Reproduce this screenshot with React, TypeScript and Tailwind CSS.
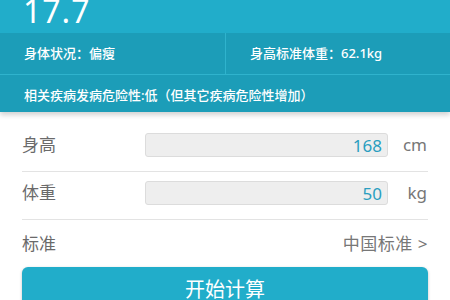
const font = { fontFamily: '"Noto Sans", "Noto Sans CJK SC", sans-serif' };

function InputRow({ label, value, unit }: { label: string; value: string; unit: string }) {
  return (
    <div className="flex items-center h-[48px] pb-[5px] border-b border-[#e3e3e3]">
      <span className="w-[123px] text-[17px] text-[#6a6a6a]">{label}</span>
      <div className="w-[243px] h-[24px] rounded-[3px] bg-[#eeeeee] border border-[#dcdcdc] flex items-center justify-end pr-[5px]">
        <span className="text-[17px] text-[#2a9ec0] leading-none">{value}</span>
      </div>
      <span className="flex-1 text-right pr-[1px] text-[17px] text-[#777]">{unit}</span>
    </div>
  );
}

export default function App() {
  return (
    <div className="w-[450px] h-[300px] overflow-hidden bg-white" style={font}>
      {/* Result card */}
      <div className="bg-[#21adca] shadow-[0_3px_5px_rgba(0,0,0,0.18)]">
        <div className="h-[33px] overflow-hidden pl-[23px]">
          <div className="text-[32px] leading-[36px] -mt-[7px] text-white tracking-[1px]">17.7</div>
        </div>
        <div className="bg-[#1c9db8] text-white text-[13px] font-medium">
          <div className="grid grid-cols-[226px_1fr] h-[42px] border-b border-[#2fb3cd]">
            <div className="flex items-center pl-[24px] border-r border-[#2fb3cd]">身体状况：偏瘦</div>
            <div className="flex items-center pl-[24px]">身高标准体重：62.1kg</div>
          </div>
          <div className="h-[37px] flex items-center pt-[4px] pl-[24px]">相关疾病发病危险性:低（但其它疾病危险性增加）</div>
        </div>
      </div>

      {/* Form */}
      <div className="px-[22px] pt-[12px]">
        <InputRow label="身高" value="168" unit="cm" />
        <InputRow label="体重" value="50" unit="kg" />
        <div className="flex items-center justify-between h-[47px]">
          <span className="text-[17px] text-[#6a6a6a]">标准</span>
          <span className="text-[17px] text-[#777] tracking-[0.5px]">中国标准 &gt;</span>
        </div>
        <button className="w-full h-[44px] rounded-[6px] bg-[#21adca] text-white text-[20px] shadow-[0_1px_3px_rgba(0,0,0,0.25)] flex items-start justify-center pt-[8px]">
          开始计算
        </button>
      </div>
    </div>
  );
}
